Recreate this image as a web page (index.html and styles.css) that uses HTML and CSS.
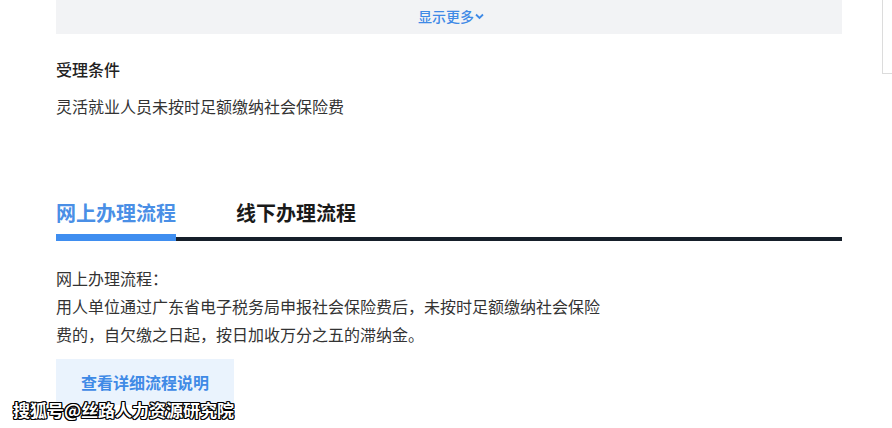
FILE: index.html
```html
<!DOCTYPE html>
<html lang="zh">
<head>
<meta charset="utf-8">
<link rel="stylesheet" href="styles.css">
</head>
<body>
<div class="page">
  <div class="more">显示更多<svg class="chev" width="9" height="7" viewBox="0 0 9 7"><polyline points="1,1.5 4.5,5 8,1.5" fill="none" stroke="#3f8ae6" stroke-width="1.8"/></svg></div>
  <h3 class="title">受理条件</h3>
  <p class="cond">灵活就业人员未按时足额缴纳社会保险费</p>
  <div class="tabs">
    <div class="tab active">网上办理流程</div>
    <div class="tab">线下办理流程</div>
  </div>
  <div class="desc">
    <p>网上办理流程：</p>
    <p>用人单位通过广东省电子税务局申报社会保险费后，未按时足额缴纳社会保险费的，自欠缴之日起，按日加收万分之五的滞纳金。</p>
  </div>
  <div class="btn">查看详细流程说明</div>
</div>
<div class="side"></div>
<div class="watermark">搜狐号@丝路人力资源研究院</div>
</body>
</html>
```
FILE: styles.css
```css
html, body {
  margin: 0;
  padding: 0;
  background: #fff;
  font-family: "Noto Sans CJK SC", "Microsoft YaHei", sans-serif;
  overflow: hidden;
}
.page {
  margin-left: 56px;
  width: 786px;
}
.more {
  height: 34px;
  background: #f2f3f5;
  display: flex;
  align-items: center;
  justify-content: center;
  gap: 1px;
  font-size: 14px;
  font-weight: 500;
  color: #3f8ae6;
  line-height: 32px;
  padding-bottom: 2px;
  padding-left: 4px;
  box-sizing: border-box;
}
.chev { margin-top: 1px; }
.title {
  margin: 23px 0 0;
  font-size: 16px;
  line-height: 24px;
  font-weight: 500;
  color: #222;
}
.cond {
  margin: 13px 0 0;
  font-size: 16px;
  line-height: 24px;
  color: #333;
}
.tabs {
  margin-top: 81px;
  display: flex;
  gap: 60px;
  border-bottom: 4px solid #161f2a;
}
.tab {
  font-size: 20px;
  line-height: 28px;
  font-weight: 700;
  color: #1a1a1a;
  padding-bottom: 7px;
  border-bottom: 7px solid transparent;
  margin-bottom: -4px;
}
.tab.active {
  color: #4a8fe6;
  border-bottom-color: #3f8ef0;
}
.desc {
  margin-top: 23px;
  max-width: 552px;
  font-size: 16px;
  line-height: 28px;
  color: #333;
}
.desc p { margin: 0; }
.btn {
  margin-top: 11px;
  width: 178px;
  height: 46px;
  background: #eaf3fd;
  color: #3f8ae6;
  font-size: 16px;
  font-weight: 700;
  display: flex;
  align-items: center;
  justify-content: center;
}
.side {
  position: absolute;
  left: 882px;
  top: 0;
  width: 20px;
  height: 73px;
  border-left: 1px solid #dcdcdc;
  border-bottom: 1px solid #dcdcdc;
  background: #fff;
}
.watermark {
  position: absolute;
  left: 13px;
  top: 397px;
  font-size: 17px;
  font-weight: 700;
  color: #fff;
  line-height: 26px;
  text-shadow: 1px 1px 0 #000, -1px -1px 0 #000, 1px -1px 0 #000, -1px 1px 0 #000, 0 1px 0 #000, 0 -1px 0 #000, 1px 0 0 #000, -1px 0 0 #000;
}
```
